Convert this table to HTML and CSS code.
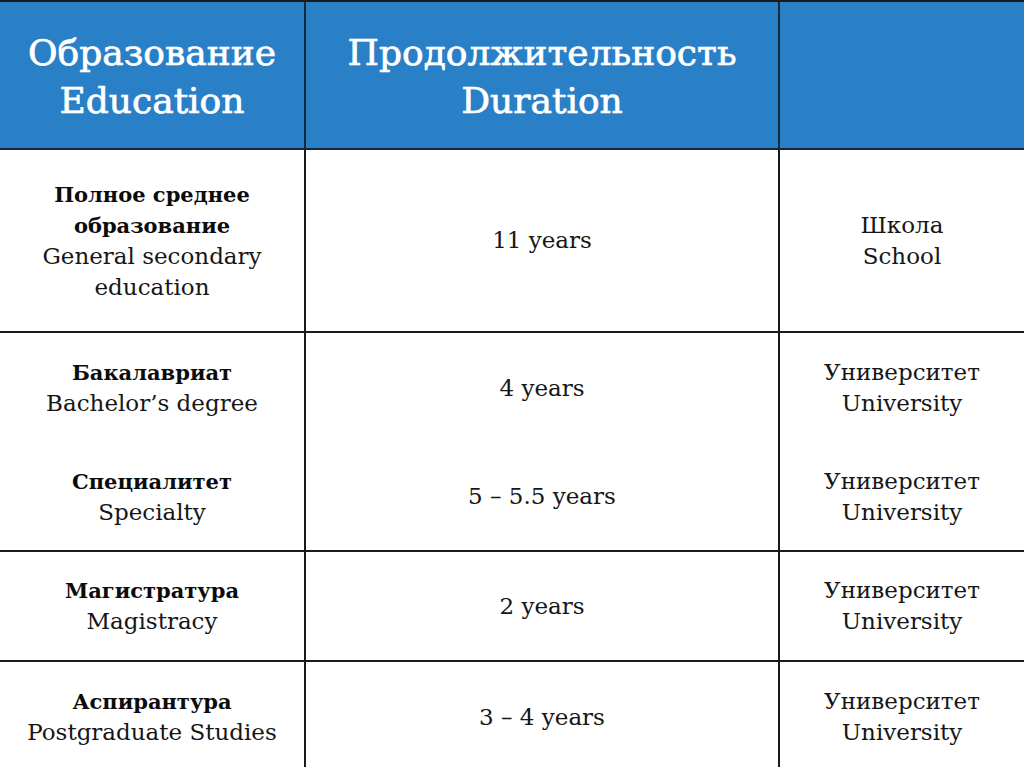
FILE: index.html
```html
<!DOCTYPE html>
<html lang="ru">
<head>
<meta charset="utf-8">
<link rel="stylesheet" href="styles.css">
</head>
<body>
<div class="table">
  <div class="cell head">Образование<br>Education</div>
  <div class="cell head">Продолжительность<br>Duration</div>
  <div class="cell head last"></div>

  <div class="cell r1"><div><b>Полное среднее<br>образование</b><br>General secondary<br>education</div></div>
  <div class="cell r1"><div>11 years</div></div>
  <div class="cell r1 last"><div>Школа<br>School</div></div>

  <div class="cell r2a"><div><b>Бакалавриат</b><br>Bachelor’s degree</div></div>
  <div class="cell r2a"><div>4 years</div></div>
  <div class="cell r2a last"><div>Университет<br>University</div></div>

  <div class="cell r2b"><div><b>Специалитет</b><br>Specialty</div></div>
  <div class="cell r2b"><div>5 – 5.5 years</div></div>
  <div class="cell r2b last"><div>Университет<br>University</div></div>

  <div class="cell r3"><div><b>Магистратура</b><br>Magistracy</div></div>
  <div class="cell r3"><div>2 years</div></div>
  <div class="cell r3 last"><div>Университет<br>University</div></div>

  <div class="cell r4"><div><b>Аспирантура</b><br>Postgraduate Studies</div></div>
  <div class="cell r4"><div>3 – 4 years</div></div>
  <div class="cell r4 last"><div>Университет<br>University</div></div>
</div>
</body>
</html>
```
FILE: styles.css
```css
html, body {
  margin: 0;
  padding: 0;
  background: #ffffff;
}
body {
  width: 1024px;
  height: 767px;
  overflow: hidden;
  font-family: "DejaVu Serif", "Liberation Serif", serif;
}
.table {
  display: grid;
  grid-template-columns: 306px 474px 1fr;
  grid-template-rows: 148px 183px 110px 109px 110px 112px;
  border-top: 2px solid #1a1a1a;
}
.cell {
  display: flex;
  align-items: center;
  justify-content: center;
  text-align: center;
  border-right: 2px solid #1a1a1a;
  border-bottom: 2px solid #1a1a1a;
  color: #161616;
  font-size: 23px;
  line-height: 31px;
}
.cell.last {
  border-right: none;
}
.cell b {
  font-weight: bold;
  font-size: 21px;
  color: #0c0c0c;
}
.head {
  background: #2a80c6;
  color: #ffffff;
  font-size: 36px;
  line-height: 48px;
  border-bottom-color: #13283c;
  border-right-color: #13283c;
  padding-top: 4px;
  -webkit-text-stroke: 0.7px #ffffff;
}
.r2a {
  border-bottom: none;
}
```
